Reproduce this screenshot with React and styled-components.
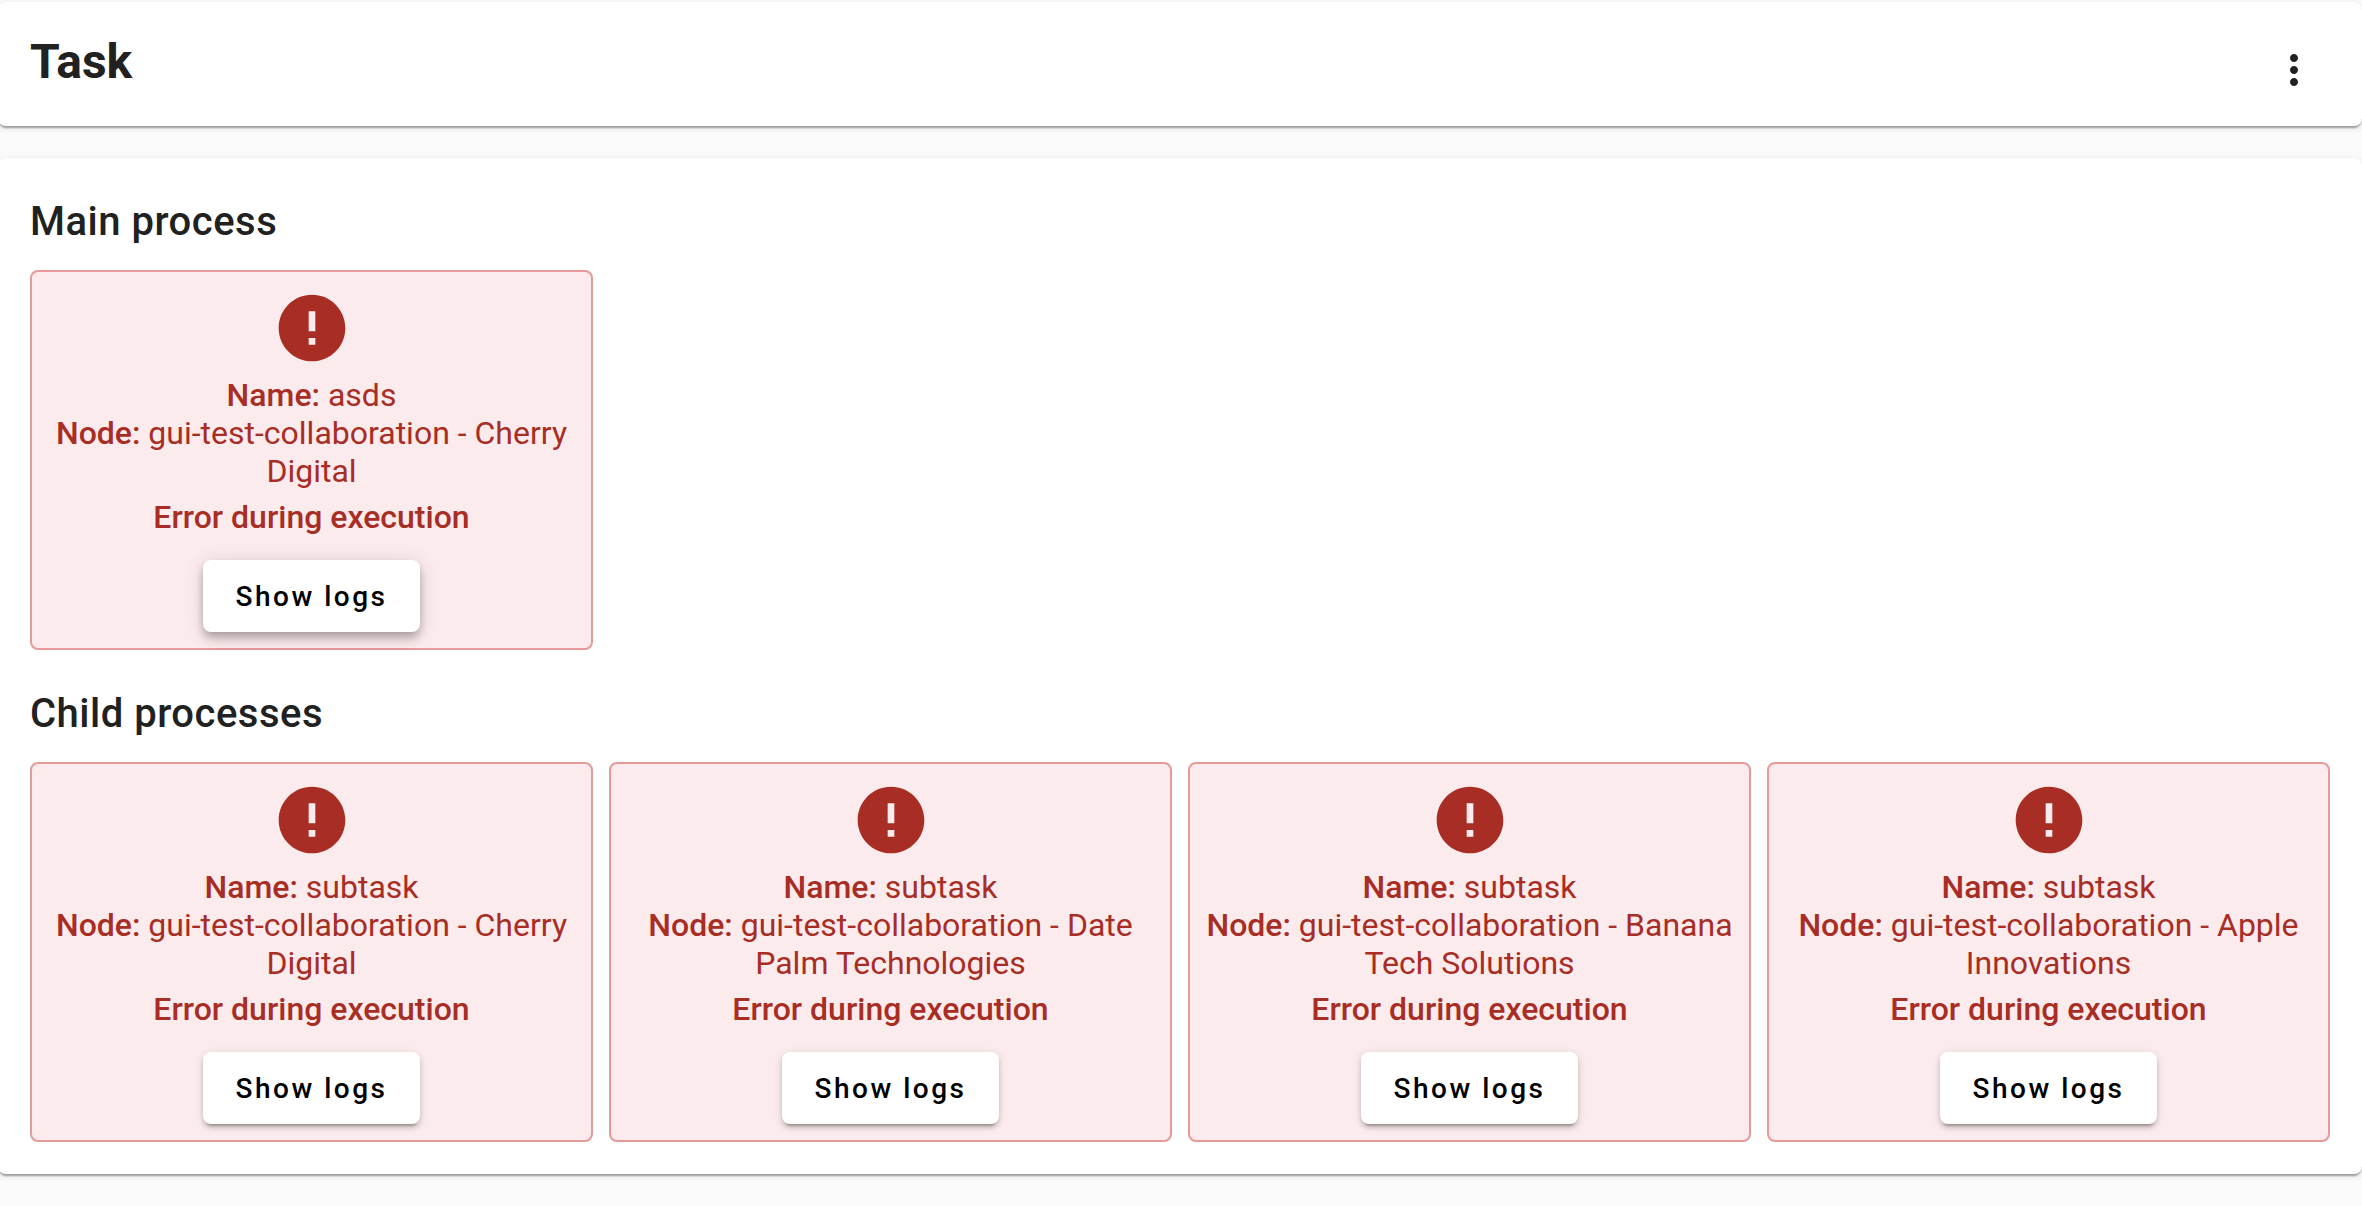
import React from "react";
import styled, { createGlobalStyle } from "styled-components";

const GlobalStyle = createGlobalStyle`
  *, *::before, *::after { box-sizing: border-box; }
  body {
    margin: 0;
    background: #fafafa;
    color: #212121;
    font-family: Roboto, "Liberation Sans", sans-serif;
    overflow-x: hidden;
  }
`;

const Page = styled.main`
  display: flex;
  flex-direction: column;
  gap: 32px;
  margin-left: -2px;
  padding: 2px 0 30px;
`;

const Card = styled.section`
  background: #fff;
  border-radius: 8px;
  box-shadow:
    0 4px 2px -2px rgba(0, 0, 0, 0.2),
    0 2px 2px 0 rgba(0, 0, 0, 0.14),
    0 2px 6px 0 rgba(0, 0, 0, 0.12);
`;

const HeaderCard = styled(Card).attrs({ as: "header" })`
  display: flex;
  justify-content: space-between;
  align-items: flex-start;
  padding: 20px 20px 8px 32px;
`;

const ContentCard = styled(Card)`
  padding: 0 32px 32px;
`;

const Title = styled.h1`
  margin: 12px 0 0;
  font-size: 48px;
  line-height: 56px;
  font-weight: 700;
`;

const SectionTitle = styled.h2`
  margin: 0;
  padding: 40px 0 24px;
  font-size: 40px;
  line-height: 48px;
  font-weight: 500;
  letter-spacing: 0.0125em;
`;

const MenuButton = styled.button`
  display: grid;
  place-items: center;
  width: 96px;
  height: 96px;
  padding: 0;
  border: 0;
  border-radius: 50%;
  background: transparent;
  color: inherit;
  cursor: pointer;
`;

const Icon = styled.svg`
  display: block;
  width: ${(p) => p.$size}px;
  height: ${(p) => p.$size}px;
  fill: currentColor;
`;

const ProcessGrid = styled.div`
  display: grid;
  grid-template-columns: repeat(4, minmax(0, 1fr));
  gap: 16px;

  @media (max-width: 1600px) {
    grid-template-columns: repeat(auto-fill, minmax(400px, 1fr));
  }
`;

const ProcessCard = styled.article`
  display: flex;
  flex-direction: column;
  align-items: center;
  gap: 8px;
  padding: 16px;
  border: 2px solid #e59a99;
  border-radius: 8px;
  background: #fcebec;
  color: #a82d25;
  font-size: 32px;
  line-height: 38px;
  text-align: center;
`;

const Line = styled.p`
  margin: 0;
`;

const Strong = styled.strong`
  font-weight: 500;
`;

const LogsButton = styled.button`
  height: 72px;
  margin-top: 16px;
  padding: 0 32px;
  border: 0;
  border-radius: 8px;
  background: #fff;
  color: #000;
  font-family: inherit;
  font-size: 28px;
  font-weight: 500;
  letter-spacing: 0.09em;
  cursor: pointer;
  box-shadow: ${(p) =>
    p.$raised
      ? "0 4px 8px -2px rgba(0,0,0,.2), 0 8px 10px 0 rgba(0,0,0,.14), 0 2px 20px 0 rgba(0,0,0,.12)"
      : "0 6px 2px -4px rgba(0,0,0,.2), 0 4px 4px 0 rgba(0,0,0,.14), 0 2px 10px 0 rgba(0,0,0,.12)"};
`;

const childProcesses = [
  { name: "subtask", node: "gui-test-collaboration - Cherry Digital" },
  { name: "subtask", node: "gui-test-collaboration - Date Palm Technologies" },
  { name: "subtask", node: "gui-test-collaboration - Banana Tech Solutions" },
  { name: "subtask", node: "gui-test-collaboration - Apple Innovations" },
];

function Process({ name, node, raised }) {
  return (
    <ProcessCard>
      <Icon $size={80} viewBox="0 0 24 24" aria-hidden="true">
        <path d="M12 2C6.48 2 2 6.48 2 12s4.48 10 10 10 10-4.48 10-10S17.52 2 12 2zm1 15h-2v-2h2v2zm0-4h-2V7h2v6z" />
      </Icon>
      <div>
        <Line><Strong>Name:</Strong> {name}</Line>
        <Line><Strong>Node:</Strong> {node}</Line>
      </div>
      <Strong>Error during execution</Strong>
      <LogsButton type="button" $raised={raised}>Show logs</LogsButton>
    </ProcessCard>
  );
}

export default function App() {
  return (
    <>
      <GlobalStyle />
      <Page>
        <HeaderCard>
          <Title>Task</Title>
          <MenuButton type="button" aria-label="More options">
            <Icon $size={48} viewBox="0 0 24 24" aria-hidden="true">
              <path d="M12 8c1.1 0 2-.9 2-2s-.9-2-2-2-2 .9-2 2 .9 2 2 2zm0 2c-1.1 0-2 .9-2 2s.9 2 2 2 2-.9 2-2-.9-2-2-2zm0 6c-1.1 0-2 .9-2 2s.9 2 2 2 2-.9 2-2-.9-2-2-2z" />
            </Icon>
          </MenuButton>
        </HeaderCard>
        <ContentCard>
          <SectionTitle>Main process</SectionTitle>
          <ProcessGrid>
            <Process name="asds" node="gui-test-collaboration - Cherry Digital" raised />
          </ProcessGrid>
          <SectionTitle>Child processes</SectionTitle>
          <ProcessGrid>
            {childProcesses.map((p) => (
              <Process key={p.node} {...p} />
            ))}
          </ProcessGrid>
        </ContentCard>
      </Page>
    </>
  );
}
